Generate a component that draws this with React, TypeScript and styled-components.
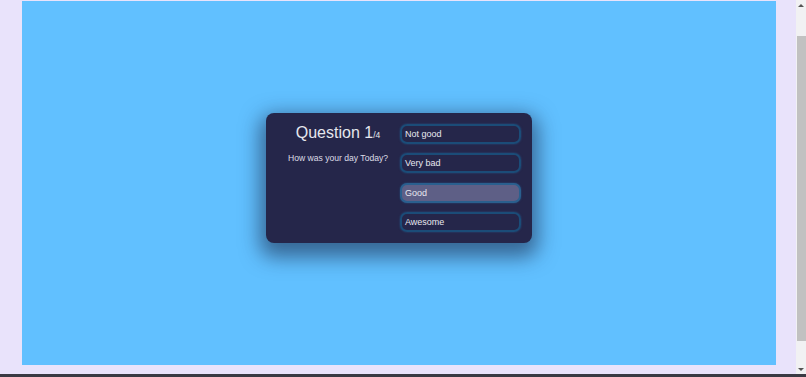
import React, {useState} from 'react';
import styled, {createGlobalStyle} from 'styled-components';

const GlobalStyle = createGlobalStyle`
  html, body {
    margin: 0;
    padding: 0;
    height: 100%;
    overflow: hidden;
    background: #e9e3fb;
    font-family: "Liberation Sans", Arial, sans-serif;
  }
`;

const Page = styled.div`
  width: 806px;
  height: 377px;
  display: flex;
  flex-direction: column;
  background: #e9e3fb;
`;

const Body = styled.div`
  flex: 1;
  display: flex;
`;

const Stage = styled.main`
  margin: 1px 0 0 22px;
  width: 754px;
  height: 364px;
  background: #61c0ff;
  display: flex;
  align-items: center;
  justify-content: center;
`;

const Spacer = styled.div`
  flex: 1;
`;

const ScrollTrack = styled.div`
  width: 10px;
  background: #f1f1f3;
  display: flex;
  flex-direction: column;
  align-items: center;
`;

const Arrow = styled.div<{ $down?: boolean }>`
  width: 0;
  height: 0;
  margin: ${p => (p.$down ? '3px 0 3px' : '4px 0 3px')};
  border-left: 3px solid transparent;
  border-right: 3px solid transparent;
  ${p => (p.$down ? 'border-top: 3px solid #555;' : 'border-bottom: 3px solid #555;')}
`;

const Thumb = styled.div`
  width: 9px;
  margin-top: 26px;
  height: 305px;
  background: #c1c1c1;
`;

const BottomBar = styled.div`
  height: 3px;
  background: #3a3a44;
`;

const Card = styled.section`
  width: 266px;
  height: 130px;
  margin-bottom: 10px;
  box-sizing: border-box;
  background: #25264a;
  border-radius: 8px;
  box-shadow: 0 8px 20px 6px rgba(20, 30, 60, 0.55);
  display: flex;
  padding: 11px 11px 0 0;
`;

const Info = styled.div`
  width: 134px;
  box-sizing: border-box;
  padding-left: 10px;
  display: flex;
  flex-direction: column;
  align-items: center;
  color: #e6e6ee;
`;

const Title = styled.h2`
  margin: -1px 0 0 0;
  font-weight: 400;
  font-size: 16px;
  line-height: 20px;

  small {
    font-size: 8.5px;
  }
`;

const Prompt = styled.p`
  margin: 8px 0 0 0;
  font-size: 8.6px;
  color: #dcdce6;
  white-space: nowrap;
`;

const Options = styled.div`
  display: flex;
  flex-direction: column;
  gap: 9.3px;
`;

const Option = styled.button<{ $active?: boolean }>`
  width: 121px;
  height: 20px;
  box-sizing: border-box;
  border-radius: 7px;
  border: 2px solid ${p => (p.$active ? '#2a5f8e' : '#1b4c78')};
  box-shadow: 0 0 2px rgba(40, 110, 170, 0.6);
  background: ${p => (p.$active ? '#5e5f86' : 'transparent')};
  color: #e8e8f0;
  font-family: "Liberation Sans", Arial, sans-serif;
  font-size: 9px;
  text-align: left;
  padding: 0 0 0 3px;
  cursor: pointer;
`;

const answers = ['Not good', 'Very bad', 'Good', 'Awesome'];

export default function App() {
    const [selected, setSelected] = useState('Good');

    return (
        <>
            <GlobalStyle/>
            <Page>
                <Body>
                    <Stage>
                        <Card>
                            <Info>
                                <Title>Question 1<small>/4</small></Title>
                                <Prompt>How was your day Today?</Prompt>
                            </Info>
                            <Options>
                                {answers.map(a => (
                                    <Option key={a} $active={a === selected} onClick={() => setSelected(a)}>
                                        {a}
                                    </Option>
                                ))}
                            </Options>
                        </Card>
                    </Stage>
                    <Spacer/>
                    <ScrollTrack>
                        <Arrow/>
                        <Thumb/>
                        <Spacer/>
                        <Arrow $down/>
                    </ScrollTrack>
                </Body>
                <BottomBar/>
            </Page>
        </>
    );
}
